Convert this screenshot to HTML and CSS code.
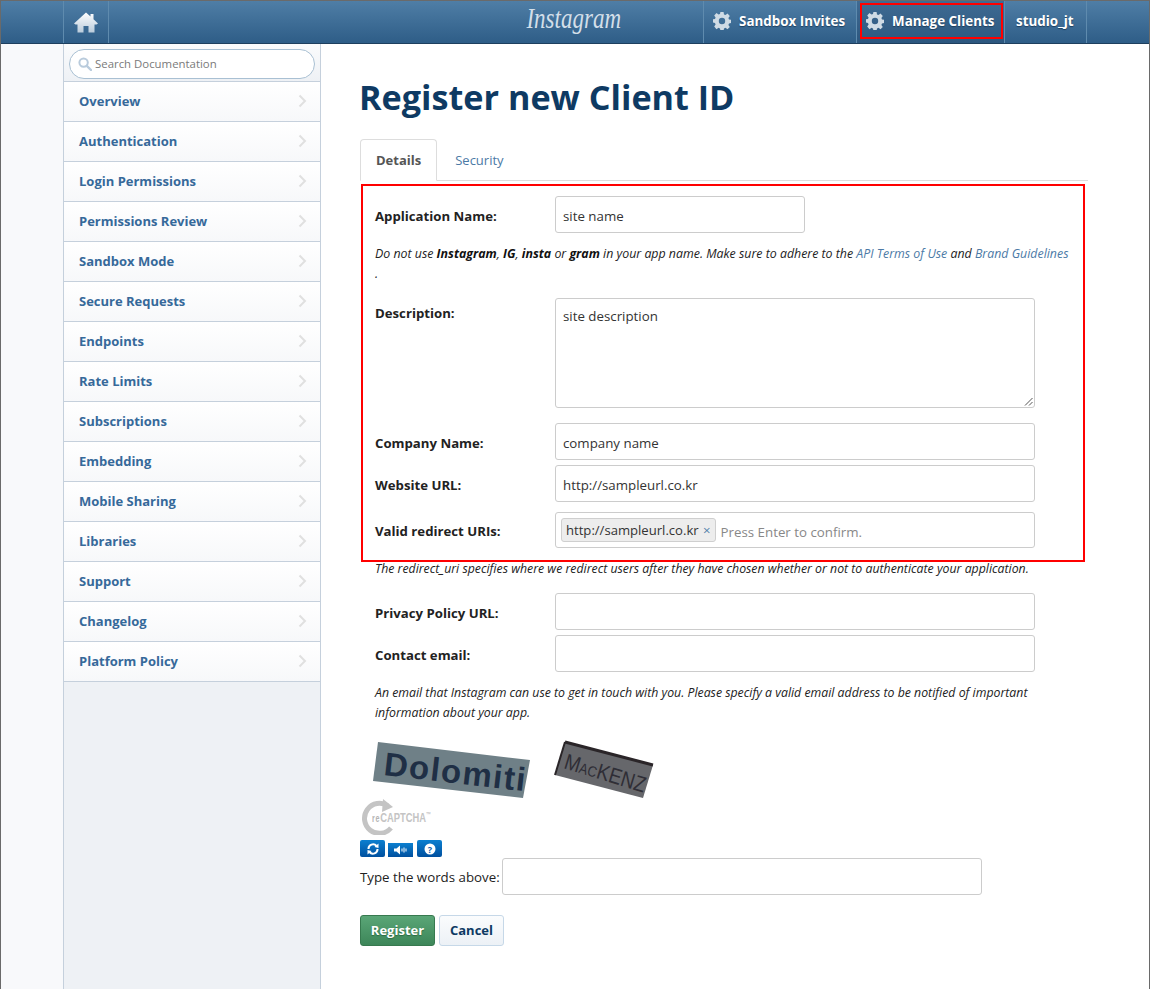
FILE: index.html
```html
<!DOCTYPE html>
<html lang="en">
<head>
<meta charset="utf-8">
<title>Register new Client ID</title>
<link rel="stylesheet" href="styles.css">
</head>
<body>
<div class="page">
  <header class="topbar">
    <a class="home">
      <svg width="24" height="21" viewBox="0 0 24 21"><defs><linearGradient id="hg" x1="0" y1="0" x2="0" y2="1"><stop offset="0" stop-color="#ffffff"/><stop offset="1" stop-color="#b9cbdb"/></linearGradient></defs><path d="M12 0.5 L16.5 4.5 V2 H19.5 V7.2 L24 11.5 L22.5 12.5 H20.5 V20.5 H14.5 V14 H9.5 V20.5 H3.5 V12.5 H1.5 L0 11.5 Z" fill="url(#hg)"/></svg>
    </a>
    <div class="logo"><span class="logo-text">Instagram</span></div>
    <nav class="nav">
      <a class="nav-item nav-invites">
        <svg class="gear" width="18" height="18" viewBox="0 0 18 18"><path class="gear-shape" fill-rule="evenodd" d="M7.4 0h3.2l.4 2.4 1.5.6 2-1.4 2.3 2.3-1.4 2 .6 1.5 2.4.4v3.2l-2.4.4-.6 1.5 1.4 2-2.3 2.3-2-1.4-1.500.6-.4 2.400H7.400l-.4-2.400-1.500-.6-2 1.400L1.200 14.400l1.400-2-.6-1.500L-.4 10.500V7.300L2 6.900l.6-1.500-1.400-2L3.500 1.100l2 1.400 1.500-.6zM9 5.800a3.200 3.200 0 1 0 0 6.400 3.200 3.200 0 0 0 0-6.400z"/></svg>
        Sandbox Invites
      </a>
      <a class="nav-item nav-active">
        <svg class="gear" width="18" height="18" viewBox="0 0 18 18"><path class="gear-shape" fill-rule="evenodd" d="M7.4 0h3.2l.4 2.4 1.5.6 2-1.4 2.3 2.3-1.4 2 .6 1.5 2.4.4v3.2l-2.4.4-.6 1.5 1.4 2-2.3 2.3-2-1.4-1.500.6-.4 2.400H7.400l-.4-2.400-1.500-.6-2 1.400L1.200 14.400l1.400-2-.6-1.500L-.4 10.500V7.300L2 6.900l.6-1.500-1.400-2L3.500 1.100l2 1.400 1.500-.6zM9 5.800a3.200 3.200 0 1 0 0 6.400 3.200 3.200 0 0 0 0-6.400z"/></svg>
        Manage Clients
        <span class="nav-mark"></span>
      </a>
      <a class="nav-item nav-user">studio_jt</a>
    </nav>
  </header>

  <div class="layout">
    <aside class="sidebar">
      <div class="search">
        <div class="search-box">
          <svg width="14" height="14" viewBox="0 0 14 14"><circle cx="5.600" cy="5.600" r="4.200" fill="none" stroke="#b9cbdc" stroke-width="2"/><path d="M8.800 8.800 L13 13" stroke="#b9cbdc" stroke-width="2.400" stroke-linecap="round"/></svg>
          <span>Search Documentation</span>
        </div>
      </div>
      <ul class="menu">
        <li class="menu-item">Overview<svg class="chev" width="9" height="14" viewBox="0 0 9 14"><path d="M1.500 1.500 L7 7 L1.500 12.500"/></svg></li>
        <li class="menu-item">Authentication<svg class="chev" width="9" height="14" viewBox="0 0 9 14"><path d="M1.500 1.500 L7 7 L1.500 12.500"/></svg></li>
        <li class="menu-item">Login Permissions<svg class="chev" width="9" height="14" viewBox="0 0 9 14"><path d="M1.500 1.500 L7 7 L1.500 12.500"/></svg></li>
        <li class="menu-item">Permissions Review<svg class="chev" width="9" height="14" viewBox="0 0 9 14"><path d="M1.500 1.500 L7 7 L1.500 12.500"/></svg></li>
        <li class="menu-item">Sandbox Mode<svg class="chev" width="9" height="14" viewBox="0 0 9 14"><path d="M1.500 1.500 L7 7 L1.500 12.500"/></svg></li>
        <li class="menu-item">Secure Requests<svg class="chev" width="9" height="14" viewBox="0 0 9 14"><path d="M1.500 1.500 L7 7 L1.500 12.500"/></svg></li>
        <li class="menu-item">Endpoints<svg class="chev" width="9" height="14" viewBox="0 0 9 14"><path d="M1.500 1.500 L7 7 L1.500 12.500"/></svg></li>
        <li class="menu-item">Rate Limits<svg class="chev" width="9" height="14" viewBox="0 0 9 14"><path d="M1.500 1.500 L7 7 L1.500 12.500"/></svg></li>
        <li class="menu-item">Subscriptions<svg class="chev" width="9" height="14" viewBox="0 0 9 14"><path d="M1.500 1.500 L7 7 L1.500 12.500"/></svg></li>
        <li class="menu-item">Embedding<svg class="chev" width="9" height="14" viewBox="0 0 9 14"><path d="M1.500 1.500 L7 7 L1.500 12.500"/></svg></li>
        <li class="menu-item">Mobile Sharing<svg class="chev" width="9" height="14" viewBox="0 0 9 14"><path d="M1.500 1.500 L7 7 L1.500 12.500"/></svg></li>
        <li class="menu-item">Libraries<svg class="chev" width="9" height="14" viewBox="0 0 9 14"><path d="M1.500 1.500 L7 7 L1.500 12.500"/></svg></li>
        <li class="menu-item">Support<svg class="chev" width="9" height="14" viewBox="0 0 9 14"><path d="M1.500 1.500 L7 7 L1.500 12.500"/></svg></li>
        <li class="menu-item">Changelog<svg class="chev" width="9" height="14" viewBox="0 0 9 14"><path d="M1.500 1.500 L7 7 L1.500 12.500"/></svg></li>
        <li class="menu-item">Platform Policy<svg class="chev" width="9" height="14" viewBox="0 0 9 14"><path d="M1.500 1.500 L7 7 L1.500 12.500"/></svg></li>
      </ul>
    </aside>

    <main class="main">
      <h1 class="title">Register new Client ID</h1>
      <div class="tabs">
        <a class="tab tab-active">Details</a>
        <a class="tab">Security</a>
      </div>
      <form class="form">
        <span class="red-box"></span>
        <div class="row">
          <label class="label">Application Name:</label>
          <div class="field field-short">site name</div>
        </div>
        <p class="help help-brand">Do not use <b>Instagram</b>, <b>IG</b>, <b>insta</b> or <b>gram</b> in your app name. Make sure to adhere to the <a>API Terms of Use</a> and <a>Brand Guidelines</a> .</p>
        <div class="row row-15">
          <label class="label label-top">Description:</label>
          <div class="field field-area">site description
            <svg class="grip" width="9" height="9" viewBox="0 0 9 9"><path d="M8.500 1 L1 8.500 M8.500 5 L5 8.500" stroke="#555" fill="none"/></svg>
          </div>
        </div>
        <div class="row row-15">
          <label class="label">Company Name:</label>
          <div class="field">company name</div>
        </div>
        <div class="row row-5">
          <label class="label">Website URL:</label>
          <div class="field">http://sampleurl.co.kr</div>
        </div>
        <div class="row row-10">
          <label class="label label-tags">Valid redirect URIs:</label>
          <div class="field field-tags">
            <span class="tag">http://sampleurl.co.kr <i class="tag-x">×</i></span>
            <span class="placeholder">Press Enter to confirm.</span>
          </div>
        </div>
        <p class="help">The redirect_uri specifies where we redirect users after they have chosen whether or not to authenticate your application.</p>
        <div class="row row-15">
          <label class="label">Privacy Policy URL:</label>
          <div class="field"></div>
        </div>
        <div class="row row-5">
          <label class="label">Contact email:</label>
          <div class="field"></div>
        </div>
        <p class="help help-narrow">An email that Instagram can use to get in touch with you. Please specify a valid email address to be notified of important information about your app.</p>

        <div class="captcha">
          <svg class="captcha-words" width="300" height="62" viewBox="0 0 300 62">
            <polygon points="18,2 170,20 163,58 13,41" fill="#6f8087"/>
            <text class="cap-a" x="23" y="35" textLength="142" lengthAdjust="spacing" transform="rotate(6.500 23 35)">Dolomiti</text>
            <polygon points="205,2 293,25 283,58 195,35" fill="#66676b"/>
            <path d="M205 2 L293 25" stroke="#2a2528" stroke-width="3"/>
            <path d="M205 2 L195 35" stroke="#2a2528" stroke-width="2"/>
            <text class="cap-b" x="203" y="28" textLength="84" lengthAdjust="spacingAndGlyphs" transform="rotate(17 203 28)">M<tspan class="cap-small">AC</tspan>KENZ</text>
          </svg>
          <div class="recaptcha">
            <svg width="34" height="36" viewBox="0 0 34 36"><path d="M28 7 A15 15 0 1 0 31 29" fill="none" stroke="#c4c4c4" stroke-width="5"/><path d="M23 0 L33 8 L22 13 Z" fill="#c4c4c4"/></svg>
            <span class="re-word"><b>re</b>CAPTCHA<sup>™</sup></span>
          </div>
          <div class="cap-btns">
            <span class="cap-btn"><svg width="14" height="12" viewBox="0 0 14 12"><path d="M2.500 6 A4.500 4.500 0 0 1 10.500 3 M11.500 6 A4.500 4.500 0 0 1 3.500 9" fill="none" stroke="#fff" stroke-width="2"/><path d="M8.500 4 L12.500 0.500 V5 Z M5.500 8 L1.500 11.500 V7 Z" fill="#fff"/></svg></span>
            <span class="cap-btn cap-btn-low"><svg width="16" height="10" viewBox="0 0 16 10"><path d="M1 3.500 H3.500 L7 0.500 V9.500 L3.500 6.500 H1 Z" fill="#fff"/><path d="M9 3.500 V6.500 M11 2.500 V7.500 M13 3.500 V6.500" stroke="#fff" stroke-width="1"/></svg></span>
            <span class="cap-btn cap-btn-help"><svg width="12" height="12" viewBox="0 0 12 12"><circle cx="6" cy="6" r="5.500" fill="#fff"/><text class="qmark" x="6" y="9.500" text-anchor="middle">?</text></svg></span>
          </div>
          <div class="cap-row">
            <label class="cap-label">Type the words above:</label>
            <div class="field field-cap"></div>
          </div>
        </div>

        <div class="actions">
          <a class="btn btn-green">Register</a>
          <a class="btn btn-light">Cancel</a>
        </div>
      </form>
    </main>
  </div>
</div>
</body>
</html>
```

FILE: styles.css
```css
* { box-sizing: border-box; }
html, body { margin: 0; padding: 0; height: 100%; overflow: hidden; }
body { font-family: "Open Sans", "Liberation Sans", sans-serif; font-size: 13px; color: #222; background: #fff; }
a { text-decoration: none; }
ul { list-style: none; margin: 0; padding: 0; }
p, h1 { margin: 0; }

.page { width: 1150px; height: 989px; display: flex; flex-direction: column; border-left: 1px solid #6a6a6a; border-right: 1px solid #6a6a6a; }

/* top bar */
.topbar { height: 44px; flex: none; display: flex; padding-left: 62px; padding-right: 62px; color: #fff; background: linear-gradient(#4f7ea6, #2e5d87); border-top: 1px solid #6a6a6a; border-bottom: 1px solid #1e3f5e; }
.home { width: 46px; display: flex; align-items: center; justify-content: center; border-left: 1px solid #5f8bae; border-right: 1px solid #5f8bae; }
.logo { flex: 1; display: flex; justify-content: flex-end; padding-right: 82px; }
.logo-text { font-family: "Liberation Serif", serif; font-style: italic; font-size: 23px; line-height: 38px; color: #d3dfe9; transform: scaleY(1.25); display: block; }
.nav { display: flex; height: 100%; border-left: 1px solid #5f8bae; }
.nav-item { position: relative; display: flex; align-items: center; gap: 8px; padding: 0 0 2px 9px; color: #fff; font-weight: 700; font-size: 13.4px; text-shadow: 0 1px 1px #1e3f5e; border-right: 1px solid #5f8bae; white-space: nowrap; }
.nav-invites { width: 153px; }
.nav-active { width: 148px; background: linear-gradient(#3f6b93, #2c577f); }
.nav-user { width: 82px; padding-left: 11px; }
.gear { flex: none; }
.gear-shape { fill: #cfdbe5; }
.nav-mark { position: absolute; left: 3px; top: 2px; width: 143px; height: 36px; border: 2px solid #f00; }

/* layout */
.layout { flex: 1; display: flex; padding-left: 62px; background: #f8f9fb; min-height: 0; }
.sidebar { width: 258px; flex: none; background: #eef1f5; border-left: 1px solid #c5d0dc; border-right: 1px solid #c5d0dc; }
.search { height: 38px; padding: 5px 5px 0 5px; background: linear-gradient(#fafbfc, #eef1f5); border-bottom: 1px solid #c5d0dc; }
.search-box { height: 30px; display: flex; align-items: center; gap: 3px; padding: 0 0 1px 8px; background: #fff; border: 1px solid #a9c0d3; border-radius: 15px; color: #7a7a7a; font-size: 11.4px; }
.menu-item { height: 40px; display: flex; align-items: center; justify-content: space-between; padding: 0 13px 2px 15px; color: #36699a; font-weight: 700; font-size: 13px; background: linear-gradient(#ffffff, #f7f8fa); border-bottom: 1px solid #c5d0dc; }
.chev { fill: none; stroke: #e0e0e0; stroke-width: 2; }

/* main */
.main { flex: 1; background: #fff; padding: 0 61px 0 39px; }
.title { margin: 27px 0 0 -1px; font-size: 34.2px; line-height: 52px; font-weight: 700; color: #0e3a63; }
.tabs { margin-top: 16px; display: flex; height: 42px; border-bottom: 1px solid #dddddd; }
.tab { padding: 0 17px 0 18px; line-height: 42px; font-size: 13px; color: #4c7aa6; }
.tab-active { height: 42px; padding: 0 15px; line-height: 40px; color: #555; font-weight: 700; background: #fff; border: 1px solid #dddddd; border-bottom-color: #fff; border-radius: 4px 4px 0 0; }

.form { position: relative; padding-top: 15px; }
.red-box { position: absolute; left: 1px; top: 3px; width: 724px; height: 378px; border: 2px solid #f00; pointer-events: none; }
.row { display: flex; padding-left: 15px; }
.row-15 { margin-top: 15px; }
.row-5 { margin-top: 5px; }
.row-10 { margin-top: 10px; }
.label { width: 180px; height: 37px; flex: none; font-weight: 700; font-size: 13.2px; line-height: 40px; color: #222; }
.label-top { line-height: 30px; }
.label-tags { height: 36px; line-height: 38px; }
.field { width: 480px; height: 37px; padding: 0 7px; line-height: 38px; background: #fff; border: 1px solid #ccc; border-radius: 3px; font-size: 13.3px; color: #333; }
.field-short { width: 250px; }
.field-area { position: relative; height: 110px; line-height: 34px; }
.grip { position: absolute; right: 1px; bottom: 1px; }
.field-tags { height: 36px; display: flex; align-items: center; gap: 5px; padding: 0 5px; }
.tag { height: 24px; line-height: 22px; padding: 0 4px; background: #ededed; border: 1px solid #cfcfcf; border-radius: 3px; color: #333; font-size: 13.1px; }
.tag-x { font-style: normal; color: #4c7aa6; margin-left: 1px; }
.placeholder { color: #888; padding-top: 3px; }
.help { margin: 10px 0 -1px; padding: 1px 0 0 15px; font-size: 12.3px; line-height: 20px; font-style: italic; color: #222; }
.help a { color: #4c7aa6; }
.help b { font-weight: 700; color: #111; }
.help-brand { width: 712px; font-size: 12.37px; }
.help-narrow { width: 690px; }

/* captcha */
.captcha { margin-top: 18px; }
.captcha-words { display: block; }
.cap-a { font-family: "Liberation Sans", sans-serif; font-weight: 700; font-size: 33px; fill: #1f2f45; }
.cap-b { font-family: "Liberation Sans", sans-serif; font-size: 22px; fill: #2f2e36; }
.cap-small { font-size: 15px; }
.recaptcha { display: flex; align-items: center; height: 38px; margin-top: -4px; }
.re-word { margin-left: -22px; font-family: "Liberation Sans", sans-serif; font-size: 13px; color: #c4c4c4; font-weight: 700; transform: scaleX(.72); transform-origin: left; white-space: nowrap; }
.re-word b { font-size: 10px; color: #b5b5b5; letter-spacing: 1px; }
.re-word sup { font-size: 7px; }
.cap-btns { display: flex; align-items: flex-end; gap: 3px; margin-top: 4px; }
.cap-btn { width: 25px; height: 17px; display: flex; align-items: center; justify-content: center; background: linear-gradient(#0b7fd0, #00509f); border-radius: 2px; }
.cap-btn-low { height: 14px; border-radius: 0; }
.cap-btn-help { margin-left: 1px; }
.qmark { font-size: 9px; font-weight: 700; fill: #0b62ad; }
.cap-row { display: flex; align-items: center; gap: 2px; margin-top: 1px; }
.cap-label { font-size: 13.3px; color: #222; white-space: nowrap; }
.field-cap { height: 37px; }

.actions { display: flex; gap: 4px; margin-top: 20px; }
.btn { height: 31px; line-height: 29px; text-align: center; font-weight: 700; font-size: 13px; border-radius: 3px; }
.btn-green { width: 75px; color: #fff; text-shadow: 0 1px 1px #2b6a43; background: linear-gradient(#5aa677, #3d8659); border: 1px solid #37794f; }
.btn-light { width: 65px; color: #0e3a63; background: linear-gradient(#fbfcfd, #ecf1f6); border: 1px solid #c6d8e8; }
```
